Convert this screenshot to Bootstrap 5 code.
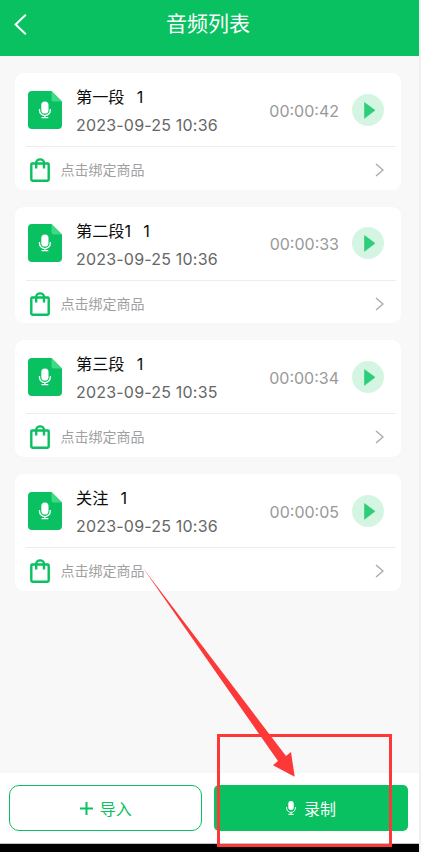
<!DOCTYPE html>
<html lang="zh-CN">
<head>
<meta charset="utf-8">
<meta name="viewport" content="width=device-width, initial-scale=1">
<title>音频列表</title>
<link href="https://cdn.jsdelivr.net/npm/bootstrap@5.3.0/dist/css/bootstrap.min.css" rel="stylesheet">
<style>
:root { --brand: #09c160; }
body { width: 421px; height: 852px; overflow: hidden; background: #f0f0f0; font-family: Inter, "Noto Sans CJK SC", sans-serif; }
.screen { width: 419px; height: 852px; background: #f8f8f8; }
.topbar { height: 55.5px; background: var(--brand); padding: 0 14px 7px; }
.topbar h1 { font-size: 21px; line-height: 30px; padding-right: 16px; }
.clips { padding: 17.5px 18px 0 14.5px; gap: 17.2px; }
.clip { height: 116.5px; border-radius: 9px; }
.clip-main { height: 74px; margin: 0 5px 0 11.5px; padding: 0 12.5px 0 2px; border-bottom: 1px solid #ececec; }
.clip-text { margin-left: 14px; padding-top: 3px; }
.clip-name { font-size: 16.2px; line-height: 28px; color: #0c0c0c; white-space: pre; word-spacing: -.5px; }
.clip-date { font-size: 16px; line-height: 28px; color: #666; letter-spacing: .2px; }
.clip-time { font-size: 16px; color: #999; margin-right: 12.5px; padding-top: 2px; }
.bind { padding: 4px 17px 0 15.5px; height: 42px; }
.bind span { font-size: 14px; color: #a0a0a0; margin-left: 10.5px; line-height: 20px; }
.actions { height: 71px; padding: 12px 11.5px 12px 9px; gap: 12px; border-bottom: 1px solid #c4c4c4; }
.actions .btn { font-size: 16px; line-height: 24px; padding: 2px 0 0; }
.btn-import { color: var(--brand); border: 1px solid var(--brand); border-radius: 10px; }
.btn-record, .btn-record:hover { color: #fff; background: var(--brand); border-radius: 5px; }
.actions .btn svg { margin-top: -2px; }
.btn-import svg { margin-right: 7px; }
.navstrip { height: 8px; background: #000; }
.callout { left: 0; top: 0; pointer-events: none; }
</style>
</head>
<body>
<svg class="d-none">
  <symbol id="file" viewBox="0 0 34 38"><path fill="#09c160" d="M4 0H23.5L34 10.5V34a4 4 0 0 1-4 4H4a4 4 0 0 1-4-4V4a4 4 0 0 1 4-4Z"/><path fill="#3ddc84" d="M23.5 0 34 10.500H26a2.500 2.500 0 0 1-2.500-2.500Z"/><rect x="13.300" y="10.500" width="7.200" height="12" rx="3.600" fill="#fff"/><path d="M11.500 18v1.200a5.400 5.400 0 0 0 10.800 0V18M16.900 24.700v2M13.500 26.700h6.800" fill="none" stroke="#fff" stroke-width="1.300"/></symbol>
  <symbol id="play" viewBox="0 0 32 32"><circle cx="16" cy="16" r="16" fill="#d5f5e3"/><path d="M12.500 8.600 23 16.300 12.500 24.300Z" fill="#2dcd79" stroke="#2dcd79" stroke-width=".6" stroke-linejoin="round"/></symbol>
  <symbol id="bag" viewBox="0 0 20 24"><path d="M2 5.500H18Q18.700 5.500 18.700 6.500V21.500Q18.700 22.700 17.500 22.700H2.500Q1.300 22.700 1.300 21.500V6.500Q1.300 5.500 2 5.500ZM6.200 10.500V5a3.900 3.600 0 0 1 7.800 0V10.500" fill="none" stroke="#09c160" stroke-width="2.400"/></symbol>
  <symbol id="next" viewBox="0 0 9 14"><path d="M1 1 8 7 1 13" fill="none" stroke="#aaa" stroke-width="1.400"/></symbol>
</svg>
<div class="screen d-flex flex-column position-relative">
  <header class="topbar d-flex align-items-center text-white">
    <svg width="13" height="21" viewBox="0 0 13 21"><path d="M11.800 .8 1.600 10.500 11.800 20.200" fill="none" stroke="#fff" stroke-width="2"/></svg>
    <h1 class="flex-grow-1 text-center fw-normal m-0">音频列表</h1>
  </header>
  <main class="clips d-flex flex-column flex-grow-1">
    <section class="clip bg-white">
      <div class="clip-main d-flex align-items-center"><svg width="34" height="38"><use href="#file"/></svg><div class="clip-text flex-grow-1"><div class="clip-name">第一段   1</div><div class="clip-date">2023-09-25 10:36</div></div><div class="clip-time">00:00:42</div><svg width="32" height="32"><use href="#play"/></svg></div>
      <div class="bind d-flex align-items-center"><svg width="20" height="24"><use href="#bag"/></svg><span class="flex-grow-1">点击绑定商品</span><svg width="9" height="14"><use href="#next"/></svg></div>
    </section>
    <section class="clip bg-white">
      <div class="clip-main d-flex align-items-center"><svg width="34" height="38"><use href="#file"/></svg><div class="clip-text flex-grow-1"><div class="clip-name">第二段1   1</div><div class="clip-date">2023-09-25 10:36</div></div><div class="clip-time">00:00:33</div><svg width="32" height="32"><use href="#play"/></svg></div>
      <div class="bind d-flex align-items-center"><svg width="20" height="24"><use href="#bag"/></svg><span class="flex-grow-1">点击绑定商品</span><svg width="9" height="14"><use href="#next"/></svg></div>
    </section>
    <section class="clip bg-white">
      <div class="clip-main d-flex align-items-center"><svg width="34" height="38"><use href="#file"/></svg><div class="clip-text flex-grow-1"><div class="clip-name">第三段   1</div><div class="clip-date">2023-09-25 10:35</div></div><div class="clip-time">00:00:34</div><svg width="32" height="32"><use href="#play"/></svg></div>
      <div class="bind d-flex align-items-center"><svg width="20" height="24"><use href="#bag"/></svg><span class="flex-grow-1">点击绑定商品</span><svg width="9" height="14"><use href="#next"/></svg></div>
    </section>
    <section class="clip bg-white">
      <div class="clip-main d-flex align-items-center"><svg width="34" height="38"><use href="#file"/></svg><div class="clip-text flex-grow-1"><div class="clip-name">关注   1</div><div class="clip-date">2023-09-25 10:36</div></div><div class="clip-time">00:00:05</div><svg width="32" height="32"><use href="#play"/></svg></div>
      <div class="bind d-flex align-items-center"><svg width="20" height="24"><use href="#bag"/></svg><span class="flex-grow-1">点击绑定商品</span><svg width="9" height="14"><use href="#next"/></svg></div>
    </section>
  </main>
  <footer class="actions d-flex bg-white">
    <button class="btn btn-import flex-fill w-50 d-flex align-items-center justify-content-center"><svg width="13" height="13" viewBox="0 0 13 13"><path d="M6.500 0V13M0 6.500H13" stroke="#09c160" stroke-width="2"/></svg>导入</button>
    <button class="btn btn-record border-0 flex-fill w-50 d-flex align-items-center justify-content-center"><svg class="me-2" width="10" height="14" viewBox="0 0 10 14"><rect x="2.300" width="5.400" height="9" rx="2.700" fill="#fff"/><path d="M.6 6v1a4.400 4.400 0 0 0 8.800 0V6M5 11.400v2M2.300 13.300h5.400" fill="none" stroke="#fff"/></svg>录制</button>
  </footer>
  <div class="navstrip"></div>
  <svg class="callout position-absolute" width="419" height="852"><rect x="218.500" y="735.500" width="172" height="110" fill="none" stroke="#fd3838" stroke-width="3"/><path d="M143 568 286 756 291 752 294.700 776.800 273 765.300 278 761Z" fill="#fd3838"/></svg>
</div>
<script src="https://cdn.jsdelivr.net/npm/bootstrap@5.3.0/dist/js/bootstrap.bundle.min.js"></script>
</body>
</html>
